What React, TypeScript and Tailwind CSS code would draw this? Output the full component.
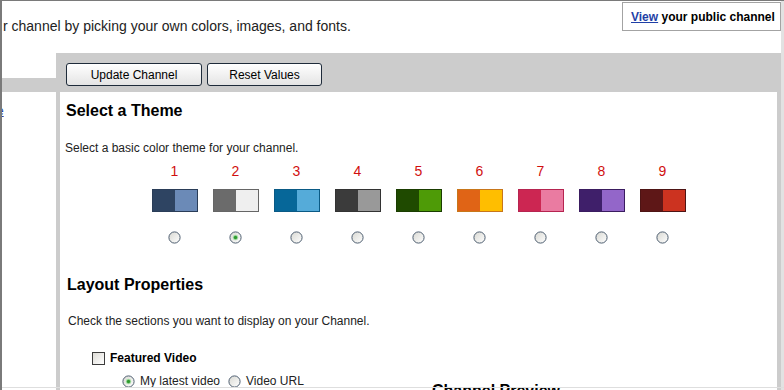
import React, { useId } from 'react';

type Theme = { n: number; dark: string; light: string; border: string };

const themes: Theme[] = [
  { n: 1, dark: 'bg-[#2e4462]', light: 'bg-[#6b8ab7]', border: 'border-[#2a3d58]' },
  { n: 2, dark: 'bg-[#6b6b6b]', light: 'bg-[#efefef]', border: 'border-[#666666]' },
  { n: 3, dark: 'bg-[#066799]', light: 'bg-[#55abd9]', border: 'border-[#0a5a85]' },
  { n: 4, dark: 'bg-[#3b3b3b]', light: 'bg-[#999999]', border: 'border-[#333333]' },
  { n: 5, dark: 'bg-[#1f4a00]', light: 'bg-[#4e9b07]', border: 'border-[#1a3d00]' },
  { n: 6, dark: 'bg-[#e06416]', light: 'bg-[#ffbe00]', border: 'border-[#c8761a]' },
  { n: 7, dark: 'bg-[#cc2652]', light: 'bg-[#ea7ba1]', border: 'border-[#b62450]' },
  { n: 8, dark: 'bg-[#3f1f6a]', light: 'bg-[#9366c9]', border: 'border-[#3a1c60]' },
  { n: 9, dark: 'bg-[#5e1717]', light: 'bg-[#cc3320]', border: 'border-[#4e1414]' },
];

function Radio({ checked = false }: { checked?: boolean }) {
  const id = useId();
  return (
    <svg width="13" height="13" viewBox="0 0 13 13" className="shrink-0">
      <defs>
        <linearGradient id={id} x1="0" y1="0" x2="1" y2="1">
          <stop offset="0" stopColor="#d8d8d2" />
          <stop offset="1" stopColor="#ffffff" />
        </linearGradient>
      </defs>
      <circle cx="6.5" cy="6.5" r="5.6" fill={`url(#${id})`} stroke="#4e5e70" strokeWidth="1" />
      {checked && (
        <>
          <circle cx="6.5" cy="6.5" r="2.7" fill="#a6dca6" />
          <circle cx="6.5" cy="6.5" r="1.7" fill="#2f9a2f" />
        </>
      )}
    </svg>
  );
}

function Checkbox() {
  return <div className="w-[13px] h-[13px] shrink-0 border border-[#3c3c3c] bg-gradient-to-br from-[#dedcd6] to-white" />;
}

function ThemePicker() {
  return (
    <div className="mt-[8px] ml-[84px] grid grid-cols-[repeat(9,61px)]">
      {themes.map((t) => (
        <div key={t.n} className="flex flex-col items-center">
          <span className="text-[14px] leading-[16px] text-[#d10f0f]">{t.n}</span>
          <div className={`mt-[10px] flex w-[46px] h-[23px] border ${t.border}`}>
            <div className={`flex-1 ${t.dark}`} />
            <div className={`flex-1 ${t.light}`} />
          </div>
          <div className="mt-[19px]">
            <Radio checked={t.n === 2} />
          </div>
        </div>
      ))}
    </div>
  );
}

function App() {
  return (
    <div className="relative w-[784px] h-[390px] overflow-hidden flex bg-white border-t border-l-2 border-[#7a7a7a] font-['Liberation_Sans',Arial,sans-serif] text-[#222]">
      <div className="w-[779px] flex flex-col">
        <div className="h-[52px] shrink-0 flex justify-between items-start">
          <p className="pt-[17px] pl-[1px] text-[14px] leading-[16px]">
            r channel by picking your own colors, images, and fonts.
          </p>
          <div className="mt-[1px] w-[159px] border border-[#a3a3a3] pl-[8px] pt-[7px] pb-[6px] text-[12px] leading-[14px] font-bold text-black">
            <a className="text-[#1f3fa6] underline">View</a> your public channel
          </div>
        </div>

        <div className="flex flex-1 min-h-0">
          <div className="w-[54px] shrink-0">
            <div className="h-[25px]" />
            <div className="h-[14px] bg-[#cccccc]" />
            <div className="mt-[12px] h-[14px] overflow-hidden">
              <a className="block -ml-[5px] text-[12px] leading-[14px] text-[#1f3fa6] underline">e</a>
            </div>
          </div>

          <div className="w-[725px] flex flex-col bg-[#cccccc] px-[4px]">
            <div className="h-[39px] shrink-0 pt-[10px] pl-[6px] flex gap-[5px]">
              <button className="w-[136px] h-[23px] rounded-[3px] border border-[#1e2b3a] bg-gradient-to-b from-white to-[#e4e4e4] text-[12px] text-black">
                Update Channel
              </button>
              <button className="w-[115px] h-[23px] rounded-[3px] border border-[#1e2b3a] bg-gradient-to-b from-white to-[#e4e4e4] text-[12px] text-black">
                Reset Values
              </button>
            </div>

            <div className="flex-1 shrink-0 bg-white">
              <h2 className="pt-[9px] pl-[6px] text-[16px] leading-[20px] font-bold text-black">Select a Theme</h2>
              <p className="mt-[20px] pl-[5px] text-[12px] leading-[14px]">Select a basic color theme for your channel.</p>
              <ThemePicker />

              <h2 className="mt-[31px] pl-[7px] text-[16px] leading-[20px] font-bold text-black">Layout Properties</h2>
              <p className="mt-[19px] pl-[8px] text-[12px] leading-[14px]">
                Check the sections you want to display on your Channel.
              </p>

              <div className="flex">
                <div className="w-[372px] pl-[32px] pt-[23px]">
                  <label className="flex items-center h-[14px] gap-[5px]">
                    <Checkbox />
                    <span className="text-[12px] leading-[14px] font-bold text-black">Featured Video</span>
                  </label>
                  <div className="mt-[9px] pl-[30px] flex items-center h-[14px] text-[12px] leading-[14px]">
                    <Radio checked />
                    <span className="ml-[5px]">My latest video</span>
                    <span className="ml-[8px]">
                      <Radio />
                    </span>
                    <span className="ml-[5px]">Video URL</span>
                  </div>
                </div>
                <div className="pt-[53px]">
                  <h3 className="text-[16px] leading-[20px] font-bold text-black">Channel Preview</h3>
                </div>
              </div>
            </div>
          </div>
        </div>
      </div>
      <div className="w-[3px] bg-[#e2e2e2]" />
      <div className="absolute left-0 right-0 top-[386px] h-px bg-[#dedede]" />
    </div>
  );
}

export default App;
